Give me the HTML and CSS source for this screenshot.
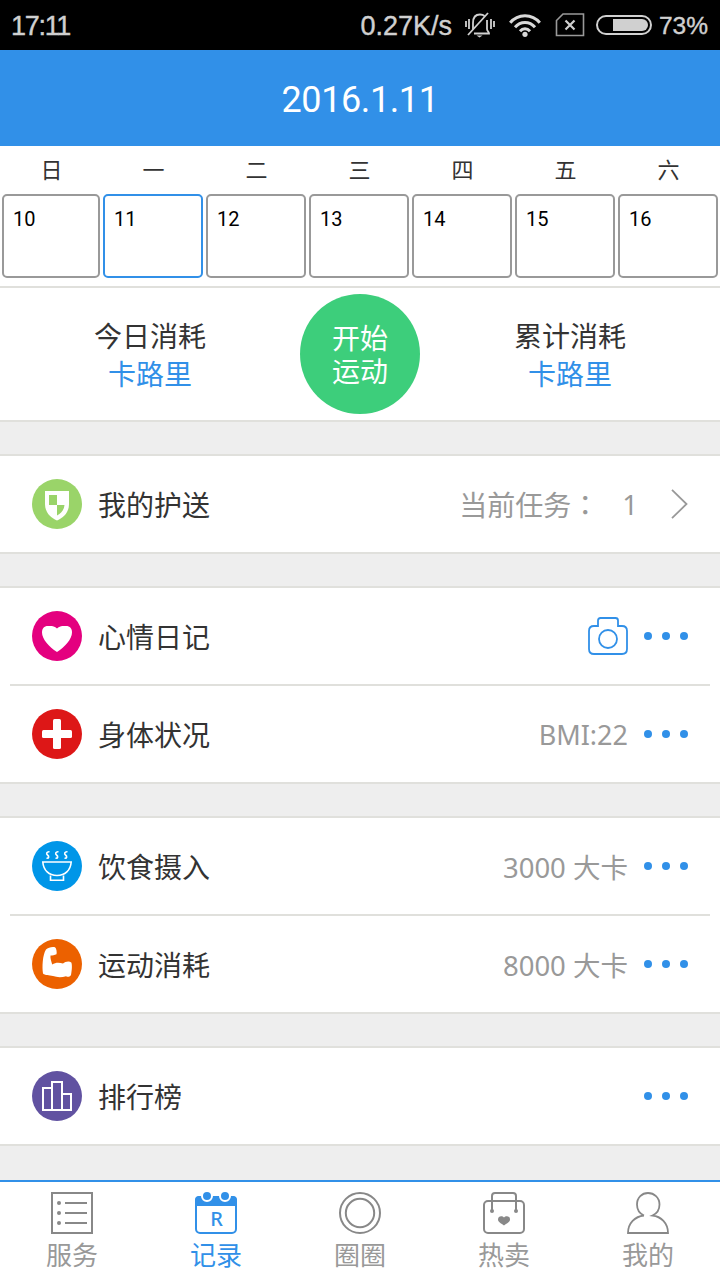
FILE: index.html
```
<!DOCTYPE html>
<html lang="zh-CN">
<head>
    <meta charset="UTF-8">
    <meta name="viewport" content="width=device-width, initial-scale=1.0">
    <title>记录</title>
    <link rel="stylesheet" href="styles.css">
</head>
<body>
    <div class="status-bar">
        <span class="clock">17:11</span>
        <div class="status-icons">
            <span class="speed">0.27K/s</span>
            <svg class="mute" width="30" height="26" viewBox="0 0 30 26" fill="none" stroke="#d0d0d0" stroke-width="1.8">
                <path d="M1 9v6M4 7v10M26 7v10M29 9v6"/>
                <path d="M8 17V11C8 4 12 2.500 15 2.500C17 2.500 18.500 3 19.500 4M22 8V17C22 19 24 20 24 21.500H9"/>
                <path d="M3 23L23 1"/>
                <path d="M11.500 23.500h6l-3 2z" fill="#d0d0d0" stroke="none"/>
            </svg>
            <svg class="wifi" width="32" height="23" viewBox="0 0 32 23" fill="none" stroke="#d8d8d8" stroke-width="3">
                <path d="M1.200 8.800C9 -.6 23 -.6 30.800 8.800"/>
                <path d="M6 13.200C11.500 6.800 20.500 6.800 26 13.200"/>
                <path d="M11 17.200C13.800 14 18.200 14 21 17.200"/>
                <circle cx="16" cy="20.300" r="2.600" fill="#d8d8d8" stroke="none"/>
            </svg>
            <svg class="sim" width="30" height="24" viewBox="0 0 30 24" fill="none" stroke="#999" stroke-width="1.600">
                <path d="M8 1H28.500V22.500H1.500V7.500Z"/>
                <path d="M10.500 7.500l9 9M19.500 7.500l-9 9" stroke="#d0d0d0" stroke-width="2.200"/>
            </svg>
            <svg class="battery" width="56" height="20" viewBox="0 0 56 20">
                <rect x="1" y="1" width="54" height="18" rx="9" fill="none" stroke="#d0d0d0" stroke-width="2"/>
                <path d="M17 4H46a6 6 0 0 1 0 12H17Z" fill="#d0d0d0"/>
            </svg>
            <span class="percent">73%</span>
        </div>
    </div>

    <header class="title-bar">2016.1.11</header>

    <div class="calendar">
        <div class="weekday">日</div>
        <div class="weekday">一</div>
        <div class="weekday">二</div>
        <div class="weekday">三</div>
        <div class="weekday">四</div>
        <div class="weekday">五</div>
        <div class="weekday">六</div>
        <div class="day">10</div>
        <div class="day active">11</div>
        <div class="day">12</div>
        <div class="day">13</div>
        <div class="day">14</div>
        <div class="day">15</div>
        <div class="day">16</div>
    </div>

    <div class="summary">
        <div class="total">
            <div>今日消耗</div>
            <div class="unit">卡路里</div>
        </div>
        <div class="start">开始运动</div>
        <div class="total">
            <div>累计消耗</div>
            <div class="unit">卡路里</div>
        </div>
    </div>

    <div class="group">
        <div class="row">
            <svg class="icon" width="50" height="50" viewBox="0 0 50 50">
                <circle cx="25" cy="25" r="25" fill="#9ad469"/>
                <path d="M13 12H37V25C37 33 32 38.500 25 41.500C18 38.500 13 33 13 25Z" fill="#fff"/>
                <path d="M17 16H25V26H17ZM25 26H32.500C32 31 29.500 34 25 36.500Z" fill="#9ad469"/>
            </svg>
            <span class="label">我的护送</span>
            <span class="value task" lang="zh-TW">当前任务：</span>
            <span class="value count">1</span>
            <svg class="arrow" width="17" height="30" viewBox="0 0 17 30" fill="none" stroke="#999" stroke-width="1.800">
                <path d="M1 .8L15.500 15L1 29.200"/>
            </svg>
        </div>
    </div>

    <div class="group">
        <div class="row">
            <svg class="icon" width="50" height="50" viewBox="0 0 50 50">
                <circle cx="25" cy="25" r="25" fill="#e4007f"/>
                <path d="M25 17.500C27 15.500 29.500 15 32 15H34C38 15 40 17.500 40 21.500C40 28 33 36 25 41C17 36 10 28 10 21.500C10 17.500 12 15 16 15H18C20.500 15 23 15.500 25 17.500Z" fill="#fff"/>
            </svg>
            <span class="label">心情日记</span>
            <svg class="camera" width="40" height="38" viewBox="0 0 40 38" fill="none" stroke="#3190e8" stroke-width="1.800">
                <path d="M10 9V3.500Q10 1 12.500 1H27.500Q30 1 30 3.500V9H34Q39 9 39 14V32Q39 37 34 37H6Q1 37 1 32V14Q1 9 6 9Z"/>
                <circle cx="20" cy="22" r="9"/>
            </svg>
            <svg class="more" width="44" height="8" viewBox="0 0 44 8" fill="#3190e8">
                <circle cx="4" cy="4" r="4"/><circle cx="22" cy="4" r="4"/><circle cx="40" cy="4" r="4"/>
            </svg>
        </div>
        <div class="row">
            <svg class="icon" width="50" height="50" viewBox="0 0 50 50">
                <circle cx="25" cy="25" r="25" fill="#dd1717"/>
                <rect x="21" y="10" width="8" height="30" rx="1.500" fill="#fff"/>
                <rect x="10" y="21" width="30" height="8" rx="1.500" fill="#fff"/>
            </svg>
            <span class="label">身体状况</span>
            <span class="value bmi">BMI:22</span>
            <svg class="more" width="44" height="8" viewBox="0 0 44 8" fill="#3190e8">
                <circle cx="4" cy="4" r="4"/><circle cx="22" cy="4" r="4"/><circle cx="40" cy="4" r="4"/>
            </svg>
        </div>
    </div>

    <div class="group">
        <div class="row">
            <svg class="icon" width="50" height="50" viewBox="0 0 50 50" fill="none" stroke="#fff" stroke-width="1.600">
                <circle cx="25" cy="25" r="25" fill="#0096e8" stroke="none"/>
                <path d="M10.800 21H39.200C38.500 29.500 33 34.500 25 34.500S11.500 29.500 10.800 21Z"/>
                <path d="M18.500 34.500V39.200H31.500V34.500"/>
                <path d="M17.500 10.800C14.500 10.500 14 13 15.500 14S17.500 17.500 14.500 17.300M26.500 10.800C23.500 10.500 23 13 24.500 14S26.500 17.500 23.500 17.300M35.500 10.800C32.500 10.500 32 13 33.500 14S35.500 17.500 32.500 17.300"/>
            </svg>
            <span class="label">饮食摄入</span>
            <span class="value">3000 大卡</span>
            <svg class="more" width="44" height="8" viewBox="0 0 44 8" fill="#3190e8">
                <circle cx="4" cy="4" r="4"/><circle cx="22" cy="4" r="4"/><circle cx="40" cy="4" r="4"/>
            </svg>
        </div>
        <div class="row">
            <svg class="icon" width="50" height="50" viewBox="0 0 50 50">
                <circle cx="25" cy="25" r="25" fill="#ec6100"/>
                <path d="M14 10.500C16 8.500 20 7.500 23 8.200C24.500 9.500 25 13 24.500 15.300C22.500 16.200 20.500 16.500 18.500 16.500C18 19.500 19.500 22.500 20.200 25.500C23.500 23 28 23.500 31 24.500C33 22.800 37 21.800 39.300 23.500C40.300 26 40 31 39 36C38 38 36 38.200 34 37.200C30 38.500 25 38.500 21 37C17 36 13 36.500 11 34.500C10 28 10.500 16 14 10.500Z" fill="#fff"/>
            </svg>
            <span class="label">运动消耗</span>
            <span class="value">8000 大卡</span>
            <svg class="more" width="44" height="8" viewBox="0 0 44 8" fill="#3190e8">
                <circle cx="4" cy="4" r="4"/><circle cx="22" cy="4" r="4"/><circle cx="40" cy="4" r="4"/>
            </svg>
        </div>
    </div>

    <div class="group">
        <div class="row">
            <svg class="icon" width="50" height="50" viewBox="0 0 50 50">
                <circle cx="25" cy="25" r="25" fill="#6152a1"/>
                <path d="M20 39V11H30V39M20 17H11V39H39V23H30" fill="none" stroke="#fff" stroke-width="2"/>
            </svg>
            <span class="label">排行榜</span>
            <svg class="more" width="44" height="8" viewBox="0 0 44 8" fill="#3190e8">
                <circle cx="4" cy="4" r="4"/><circle cx="22" cy="4" r="4"/><circle cx="40" cy="4" r="4"/>
            </svg>
        </div>
    </div>

    <nav class="tabs">
        <div class="tab">
            <svg width="42" height="42" viewBox="0 0 42 42" fill="none" stroke="#888" stroke-width="2">
                <rect x="1" y="1" width="40" height="40"/>
                <path d="M14 11H36M14 21H36M14 31H36"/>
                <g fill="#888" stroke="none">
                    <circle cx="8" cy="11" r="2"/><circle cx="8" cy="21" r="2"/><circle cx="8" cy="31" r="2"/>
                </g>
            </svg>
            <span>服务</span>
        </div>
        <div class="tab active">
            <svg width="42" height="42" viewBox="0 0 42 42">
                <rect x="1" y="5" width="40" height="36" rx="4" fill="#fff" stroke="#3190e8" stroke-width="2"/>
                <path d="M0 14V8Q0 4 4 4H38Q42 4 42 8V14Z" fill="#3190e8"/>
                <circle cx="12" cy="4" r="5" fill="#3190e8" stroke="#fff" stroke-width="2"/>
                <circle cx="30" cy="4" r="5" fill="#3190e8" stroke="#fff" stroke-width="2"/>
                <text class="letter" x="21.500" y="34" text-anchor="middle">R</text>
            </svg>
            <span>记录</span>
        </div>
        <div class="tab">
            <svg width="42" height="42" viewBox="0 0 42 42" fill="none" stroke="#888" stroke-width="2">
                <circle cx="21" cy="21" r="20"/>
                <circle cx="21" cy="21" r="14.200"/>
            </svg>
            <span>圈圈</span>
        </div>
        <div class="tab">
            <svg width="42" height="42" viewBox="0 0 42 42" fill="none" stroke="#888" stroke-width="2">
                <rect x="1" y="9" width="40" height="32" rx="4"/>
                <path d="M9 19V4Q9 1 12 1H30Q33 1 33 4V19"/>
                <circle cx="9" cy="19" r="2" fill="#888" stroke="none"/>
                <circle cx="33" cy="19" r="2" fill="#888" stroke="none"/>
                <path d="M21 25.500C22.500 23.500 27 23.500 27 27.500C27 30 23.500 31.500 21 33.500C18.500 31.500 15 30 15 27.500C15 23.500 19.500 23.500 21 25.500Z" fill="#888" stroke="none"/>
            </svg>
            <span>热卖</span>
        </div>
        <div class="tab">
            <svg width="42" height="42" viewBox="0 0 42 42" fill="none" stroke="#888" stroke-width="1.800">
                <path d="M17 23.500C12.500 21.500 10 17.500 10 12.500C10 5.500 15 1 21 1S32.500 5.500 32.500 12.500C32.500 17.500 30 21.500 25.500 23.500C34 24.500 41 31 41 41H1C1 31 8 24.500 17 23.500"/>
            </svg>
            <span>我的</span>
        </div>
    </nav>
</body>
</html>
```
FILE: styles.css
```
* {
    box-sizing: border-box;
}

body {
    display: flex;
    flex-direction: column;
    height: 1280px;
    margin: 0;
    background-color: #eee;
    color: #333;
    font-family: "Noto Sans", "Noto Sans CJK SC", sans-serif;
    font-size: 28px;
}

svg {
    display: block;
    flex: none;
    overflow: visible;
}

/* Status bar */
.status-bar {
    display: flex;
    justify-content: space-between;
    height: 50px;
    padding: 0 12px 0 11px;
    background-color: #000;
    color: #d0d0d0;
    font-family: "Liberation Sans", Arial, sans-serif;
    font-size: 27px;
    line-height: 52px;
    -webkit-text-stroke: 0.4px #d0d0d0;
}

.clock {
    letter-spacing: -1.3px;
}

.status-icons {
    display: flex;
    align-items: center;
    height: 50px;
}

.speed {
    padding-top: 2px;
}

.mute {
    margin-left: 13px;
}

.wifi {
    margin-left: 14px;
}

.sim {
    margin-left: 14px;
}

.battery {
    margin: 0 7px 0 11px;
}

.percent {
    padding-top: 2px;
    font-size: 24.5px;
}

.title-bar {
    height: 96px;
    background-color: #3190e8;
    color: #fff;
    font-family: Roboto, sans-serif;
    font-size: 36px;
    letter-spacing: -0.4px;
    line-height: 100px;
    text-align: center;
}

/* Week calendar */
.calendar {
    display: grid;
    grid-template-columns: 98px repeat(6, 100px);
    grid-template-rows: 48px 84px;
    column-gap: 3px;
    height: 142px;
    padding: 0 2px;
    border-bottom: 2px solid #e0e0dc;
    background-color: #fff;
}

.weekday {
    padding-left: 1px;
    font-size: 22px;
    line-height: 46px;
    text-align: center;
}

.day {
    padding: 13px 9px;
    border: 2px solid #999;
    border-radius: 5px;
    color: #000;
    font-family: Roboto, sans-serif;
    font-size: 20px;
    line-height: 21px;
}

.day.active {
    border-color: #3190e8;
}

/* Calories */
.summary {
    display: flex;
    align-items: center;
    height: 134px;
    border-bottom: 2px solid #e0e0dc;
    background-color: #fff;
}

.total {
    flex: 1;
    padding-top: 2px;
    line-height: 38px;
    text-align: center;
}

.unit {
    color: #3190e8;
}

.start {
    width: 120px;
    height: 120px;
    padding: 28px 32px 0;
    border-radius: 50%;
    background-color: #3dce7b;
    color: #fff;
    line-height: 33px;
}

/* Lists */
.group {
    margin-top: 32px;
    border-top: 2px solid #e0e0dc;
    border-bottom: 2px solid #e0e0dc;
    background-color: #fff;
}

.row {
    display: flex;
    align-items: center;
    height: 96px;
    margin: 0 10px;
    padding: 0 22px;
}

.row + .row {
    height: 98px;
    border-top: 2px solid #e0e0dc;
}

.label {
    flex: 1;
    margin-left: 16px;
}

.value {
    color: #999;
    font-size: 27.5px;
}

.task {
    font-family: "Noto Sans CJK TC", sans-serif;
    font-size: 28px;
}

.count {
    margin: 0 33px 0 23px;
}

.bmi {
    font-size: 27px;
}

.more {
    margin-left: 16px;
}

/* Bottom tabs */
.tabs {
    display: flex;
    height: 100px;
    margin-top: auto;
    border-top: 2px solid #3190e8;
    background-color: #fff;
}

.tab {
    display: flex;
    flex: 1;
    flex-direction: column;
    align-items: center;
    padding-top: 10px;
    color: #999;
    font-size: 26px;
    line-height: 42px;
}

.tab.active {
    color: #3190e8;
}

.letter {
    fill: #3190e8;
    font-size: 20px;
    font-weight: 500;
}
```
